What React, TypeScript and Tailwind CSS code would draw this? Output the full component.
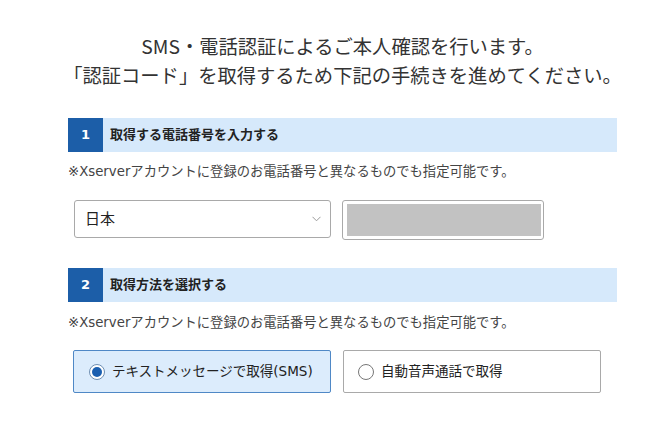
const font = {
  fontFamily: '"DejaVu Sans", "Noto Sans CJK JP", sans-serif',
};

function SectionHeader({ num, title }: { num: string; title: string }) {
  return (
    <div className="flex h-[34px] w-full bg-[#d6e9fb]">
      <div className="flex w-[35px] items-center justify-center bg-[#1c5ea8] text-[13px] font-bold text-white">
        {num}
      </div>
      <div className="flex items-center pl-[7px] text-[13px] font-bold text-[#222]">
        {title}
      </div>
    </div>
  );
}

function Note() {
  return (
    <p className="whitespace-nowrap text-[13.3px] leading-[20px] text-[#444]">
      ※Xserverアカウントに登録のお電話番号と異なるものでも指定可能です。
    </p>
  );
}

function Radio({ checked }: { checked?: boolean }) {
  return (
    <span
      className={
        checked
          ? "flex h-[16px] w-[16px] items-center justify-center rounded-full border border-[#6f8fb3] bg-white"
          : "flex h-[16px] w-[16px] items-center justify-center rounded-full border border-[#777] bg-white"
      }
    >
      {checked && <span className="h-[10px] w-[10px] rounded-full bg-[#1b5fb0]" />}
    </span>
  );
}

export default function App() {
  return (
    <div className="min-h-[427px] w-[672px] bg-white text-[#333]" style={font}>
      <div className="ml-[68px] w-[549px] pt-[32px]">
        <div
          className="-mx-[30px] whitespace-nowrap text-center text-[19.3px] leading-[29px] text-[#333]"
          style={{ fontFamily: '"Noto Sans CJK JP", sans-serif' }}
        >
          <p>SMS・電話認証によるご本人確認を行います。</p>
          <p>「認証コード」を取得するため下記の手続きを進めてください。</p>
        </div>

        <div className="mt-[28px]">
          <SectionHeader num="1" title="取得する電話番号を入力する" />
          <div className="mt-[10px]">
            <Note />
          </div>
          <div className="mt-[18px] flex items-start pl-[6px]">
            <div className="flex h-[38px] w-[257px] items-center justify-between rounded-[3px] border border-[#a9a9a9] bg-white pl-[10px] pr-[9px]">
              <span className="text-[15px] text-[#222]">日本</span>
              <svg width="9" height="6" viewBox="0 0 9 6" fill="none">
                <path d="M0.5 0.8 L4.5 4.8 L8.5 0.8" stroke="#9a9a9a" strokeWidth="1" />
              </svg>
            </div>
            <div className="ml-[11px] h-[40px] w-[202px] rounded-[3px] border border-[#a9a9a9] bg-white py-[3px] pl-[4px] pr-[2px]">
              <div className="h-full w-full bg-[#c2c2c2]" />
            </div>
          </div>
        </div>

        <div className="mt-[28px]">
          <SectionHeader num="2" title="取得方法を選択する" />
          <div className="mt-[11px]">
            <Note />
          </div>
          <div className="mt-[17px] flex gap-[12px] pl-[5px]">
            <label className="flex h-[43px] w-[258px] items-center gap-[7px] rounded-[2px] border border-[#4f88c6] bg-[#dcecfc] pl-[15px]">
              <Radio checked />
              <span className="text-[13.5px] text-[#222]">テキストメッセージで取得(SMS)</span>
            </label>
            <label className="flex h-[43px] w-[258px] items-center gap-[7px] rounded-[2px] border border-[#a9a9a9] bg-white pl-[14px]">
              <Radio />
              <span className="text-[13.5px] text-[#222]">自動音声通話で取得</span>
            </label>
          </div>
        </div>
      </div>
    </div>
  );
}
